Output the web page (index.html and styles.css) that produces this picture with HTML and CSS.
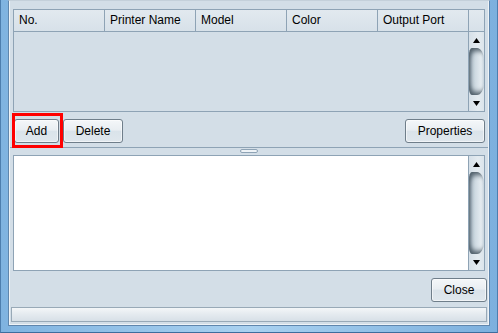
FILE: index.html
```html
<!DOCTYPE html>
<html>
<head>
<meta charset="utf-8">
<link rel="stylesheet" href="styles.css">
</head>
<body>
<div class="window">
  <div class="client">
    <div class="table">
      <div class="thead">
        <div class="th">No.</div>
        <div class="th">Printer Name</div>
        <div class="th">Model</div>
        <div class="th">Color</div>
        <div class="th">Output Port</div>
        <div class="corner"></div>
      </div>
      <div class="tbody">
        <div class="rows"></div>
        <div class="vscroll">
          <div class="arr"><svg width="7" height="5" viewBox="0 0 7 5"><polygon points="0,5 3.5,0 7,5" fill="#000"/></svg></div>
          <div class="track"><div class="thumb"></div></div>
          <div class="arr"><svg width="7" height="5" viewBox="0 0 7 5"><polygon points="0,0 7,0 3.5,5" fill="#000"/></svg></div>
        </div>
      </div>
    </div>
    <div class="btnrow">
      <button class="btn add">Add</button>
      <button class="btn del">Delete</button>
      <button class="btn props">Properties</button>
    </div>
    <div class="divider"><span class="grip"></span></div>
    <div class="textarea">
      <div class="text"></div>
      <div class="vscroll">
        <div class="arr"><svg width="7" height="5" viewBox="0 0 7 5"><polygon points="0,5 3.5,0 7,5" fill="#000"/></svg></div>
        <div class="track"><div class="thumb"></div></div>
        <div class="arr"><svg width="7" height="5" viewBox="0 0 7 5"><polygon points="0,0 7,0 3.5,5" fill="#000"/></svg></div>
      </div>
    </div>
    <div class="closerow">
      <button class="btn close">Close</button>
    </div>
    <div class="statusbar"></div>
  </div>
</div>
</body>
</html>
```
FILE: styles.css
```css
* { box-sizing: border-box; }
html, body { margin: 0; padding: 0; }
body {
  width: 498px;
  height: 333px;
  overflow: hidden;
  font-family: "Liberation Sans", Arial, sans-serif;
  font-size: 12px;
  color: #000;
  background: #8fbfe6;
}
.window {
  width: 498px;
  height: 333px;
  display: flex;
  padding: 0 7px 6px 7px;
  background: linear-gradient(90deg, #7fb3e0 0%, #a9d1f0 50%, #7cb0de 100%);
  border-left: 1px solid #4d7eae;
  border-right: 1px solid #4d7eae;
  border-bottom: 1px solid #3d6d9d;
}
.client {
  flex: 1;
  display: flex;
  flex-direction: column;
  background: #d3dee7;
  border: 1px solid #5f86ad;
  border-top: 1px solid #c4d0da;
  box-shadow: inset 1px 0 #eef3f7, inset -1px 0 #eef3f7, inset 0 -1px #eef3f7;
  padding: 8px 4px 3px 4px;
}
.table {
  flex: none;
  height: 103px;
  border: 1px solid #8ea3b5;
  display: flex;
  flex-direction: column;
}
.thead {
  display: flex;
  height: 22px;
  flex: none;
  border-bottom: 1px solid #8ea3b5;
  background: linear-gradient(180deg, #e2e9ef, #d7e1e9);
}
.th {
  width: 91px;
  flex: none;
  border-right: 1px solid #8ea3b5;
  padding-left: 5px;
  line-height: 21px;
  white-space: nowrap;
}
.corner { flex: 1; }
.tbody {
  flex: 1;
  display: flex;
  min-height: 0;
}
.rows { flex: 1; }
.vscroll {
  width: 16px;
  flex: none;
  border-left: 1px solid #8ea3b5;
  background: linear-gradient(90deg, #d6e0e8, #e4ebf0 60%, #dbe4eb);
  display: flex;
  flex-direction: column;
}
.arr {
  height: 16px;
  flex: none;
  display: flex;
  align-items: center;
  justify-content: center;
}
.arr svg { display: block; }
.track {
  flex: 1;
  display: flex;
}
.thumb {
  flex: 1;
  border-radius: 3px 7px 7px 3px / 8px 12px 12px 8px;
  background: linear-gradient(90deg, #a9b9c5 0%, #c6d2db 25%, #d6e0e7 55%, #e4ebf0 80%, #c8d4dd 100%);
  box-shadow: inset 3px 6px 5px -3px #4f5e69, inset 3px -6px 5px -3px #4f5e69;
}
.btnrow {
  flex: none;
  display: flex;
  margin-top: 7px;
  height: 24px;
}
.btn {
  height: 24px;
  font: inherit;
  color: #000;
  padding: 0;
  border: 1px solid #6f7e8a;
  border-radius: 3px;
  background: linear-gradient(180deg, #f4f7f9 0%, #e9eef2 45%, #dae3ea 52%, #dfe7ed 100%);
  box-shadow: inset 0 0 0 1px rgba(255,255,255,0.55);
}
.add {
  width: 45px;
  margin-left: 1px;
  position: relative;
}
.add::after {
  content: "";
  position: absolute;
  left: -3px;
  right: -5px;
  top: -7px;
  bottom: -6px;
  border: 3px solid #ff0000;
}
.del {
  width: 60px;
  margin-left: 4px;
}
.props {
  width: 80px;
  margin-left: auto;
}
.divider {
  flex: none;
  height: 8px;
  margin: 4px -3px 0 -3px;
  border-top: 1px solid #8ea3b5;
  padding-top: 1px;
  display: flex;
  justify-content: center;
  align-items: flex-start;
}
.grip {
  width: 18px;
  height: 4px;
  border: 1px solid #8ea3b5;
  border-radius: 2px;
  background: #eef3f7;
}
.textarea {
  flex: none;
  height: 116px;
  border: 1px solid #8ea3b5;
  display: flex;
  background: #fff;
}
.text { flex: 1; }
.closerow {
  flex: none;
  display: flex;
  justify-content: flex-end;
  margin-top: 7px;
  margin-right: -2px;
}
.close { width: 56px; }
.statusbar {
  flex: none;
  height: 15px;
  margin: 5px -2px 0 -2px;
  border: 1px solid #98a9b7;
  background: linear-gradient(180deg, #f3f6f8 0%, #e4eaef 50%, #d7e0e7 100%);
}
```
